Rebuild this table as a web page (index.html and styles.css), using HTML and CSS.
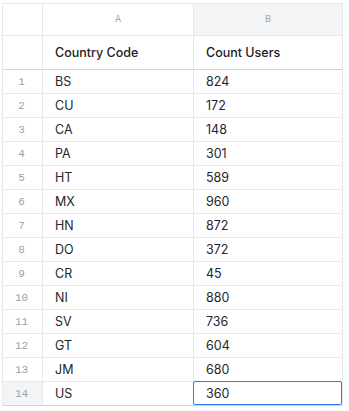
FILE: index.html
```html
<!DOCTYPE html>
<html>
<head>
<meta charset="utf-8">
<link rel="stylesheet" href="styles.css">
</head>
<body>
<div class="sheet">
  <div class="cell corner"></div>
  <div class="cell col-letter">A</div>
  <div class="cell col-letter active">B</div>

  <div class="cell head-num"></div>
  <div class="cell head">Country Code</div>
  <div class="cell head">Count Users</div>

  <div class="cell num">1</div><div class="cell">BS</div><div class="cell">824</div>
  <div class="cell num">2</div><div class="cell">CU</div><div class="cell">172</div>
  <div class="cell num">3</div><div class="cell">CA</div><div class="cell">148</div>
  <div class="cell num">4</div><div class="cell">PA</div><div class="cell">301</div>
  <div class="cell num">5</div><div class="cell">HT</div><div class="cell">589</div>
  <div class="cell num">6</div><div class="cell">MX</div><div class="cell">960</div>
  <div class="cell num">7</div><div class="cell">HN</div><div class="cell">872</div>
  <div class="cell num">8</div><div class="cell">DO</div><div class="cell">372</div>
  <div class="cell num">9</div><div class="cell">CR</div><div class="cell">45</div>
  <div class="cell num">10</div><div class="cell">NI</div><div class="cell">880</div>
  <div class="cell num">11</div><div class="cell">SV</div><div class="cell">736</div>
  <div class="cell num">12</div><div class="cell">GT</div><div class="cell">604</div>
  <div class="cell num">13</div><div class="cell">JM</div><div class="cell">680</div>
  <div class="cell num active last">14</div><div class="cell last">US</div><div class="cell last selected">360</div>
</div>
</body>
</html>
```

FILE: styles.css
```css
html, body {
  margin: 0;
  padding: 0;
  background: #ffffff;
}

body {
  padding: 3px 0 0 2px;
  font-family: Inter, "Liberation Sans", sans-serif;
}

.sheet {
  display: grid;
  grid-template-columns: 40px 151px 149px;
  grid-template-rows: 32px 34px repeat(14, 24px);
  width: max-content;
  border-top: 1px solid #e6e8ec;
  border-left: 1px solid #e6e8ec;
}

.cell {
  position: relative;
  box-sizing: border-box;
  border-right: 1px solid #e6e8ec;
  border-bottom: 1px solid #e6e8ec;
  display: flex;
  align-items: center;
  padding-left: 12px;
  font-size: 12.5px;
  color: #24272d;
  white-space: nowrap;
}

.col-letter {
  justify-content: center;
  padding-left: 0;
  font-family: "Liberation Mono", "DejaVu Sans Mono", monospace;
  font-size: 10px;
  color: #a3a8b0;
}

.col-letter.active {
  background: #f3f4f6;
}

.head {
  font-weight: 500;
  color: #1d2025;
  border-bottom-color: #cfd4dc;
}

.head-num {
  border-bottom-color: #cfd4dc;
}

.num {
  justify-content: center;
  padding-left: 0;
  padding-right: 2px;
  font-family: "Liberation Mono", "DejaVu Sans Mono", monospace;
  font-size: 11px;
  color: #9a9fa8;
}

.num.active {
  background: #f3f4f6;
}

.last {
  border-bottom-color: #cfd4dc;
}

.selected::after {
  content: "";
  position: absolute;
  left: -1px;
  top: -1px;
  right: 0;
  bottom: 0;
  border: 1.5px solid #2f7bea;
  border-radius: 2px;
}
```
